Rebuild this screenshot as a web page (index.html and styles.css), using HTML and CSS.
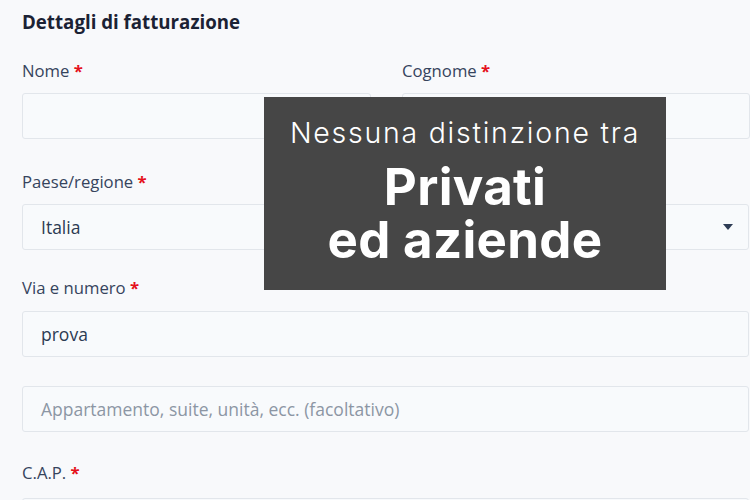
FILE: index.html
```html
<!DOCTYPE html>
<html lang="it">
<head>
<meta charset="utf-8">
<link rel="stylesheet" href="styles.css">
</head>
<body>
<div class="page">
  <h3 class="title">Dettagli di fatturazione</h3>
  <div class="row two">
    <div class="field">
      <label class="label">Nome <span class="req">*</span></label>
      <div class="input"></div>
    </div>
    <div class="field">
      <label class="label">Cognome <span class="req">*</span></label>
      <div class="input"></div>
    </div>
  </div>
  <div class="field f-paese">
    <label class="label">Paese/regione <span class="req">*</span></label>
    <div class="input select"><span class="val">Italia</span>
      <svg class="caret" width="10" height="6" viewBox="0 0 10 6"><path d="M0 0H10L5 6Z" fill="#2e3c55"/></svg>
    </div>
  </div>
  <div class="field f-via">
    <label class="label">Via e numero <span class="req">*</span></label>
    <div class="input"><span class="val">prova</span></div>
    <div class="input second"><span class="ph">Appartamento, suite, unità, ecc. (facoltativo)</span></div>
  </div>
  <div class="field f-cap">
    <label class="label">C.A.P. <span class="req">*</span></label>
    <div class="input"></div>
  </div>

  <div class="overlay">
    <div class="o-line1">Nessuna distinzione tra</div>
    <div class="o-big">Privati</div>
    <div class="o-big">ed aziende</div>
  </div>
</div>
</body>
</html>
```

FILE: styles.css
```css
html, body {
  margin: 0;
  padding: 0;
  background: #f8f9fb;
  overflow: hidden;
}
.page {
  position: relative;
  width: 750px;
  height: 500px;
  padding: 0 0 0 22px;
  box-sizing: border-box;
  overflow: hidden;
  font-family: "Open Sans", "Noto Sans", sans-serif;
  color: #35435c;
}
.title {
  margin: 0;
  padding-top: 10px;
  font-size: 18.7px;
  line-height: 24px;
  font-weight: 700;
  color: #1b2234;
  height: 49px;
}
.row.two {
  display: grid;
  grid-template-columns: 349px 348px;
  column-gap: 31px;
}
.field {
  display: flex;
  flex-direction: column;
}
.label {
  font-size: 16.7px;
  line-height: 24px;
  height: 24px;
  color: #36445d;
  margin-bottom: 10px;
}
.req {
  color: #e5111b;
  font-weight: 700;
}
.input {
  height: 46px;
  flex: none;
  box-sizing: border-box;
  border: 1px solid #e2e6eb;
  border-radius: 3px;
  background: #f8fafc;
  display: flex;
  align-items: center;
  padding: 0 18px;
  font-size: 17.5px;
  color: #2c3a52;
  width: 727px;
}
.row.two .input { width: auto; }
.f-paese { margin-top: 31px; }
.select { justify-content: space-between; padding-right: 15px; }
.caret { display: block; }
.f-via { margin-top: 26px; }
.f-via .label { margin-bottom: 11px; }
.input.second { margin-top: 29px; }
.ph { color: #8c96a4; }
.f-cap { margin-top: 29px; }
.f-cap .label { margin-bottom: 13px; }

.overlay {
  position: absolute;
  left: 264px;
  top: 97px;
  width: 402px;
  height: 193px;
  background: #464646;
  color: #fff;
  text-align: center;
  font-family: "Inter", sans-serif;
  padding-top: 16px;
  box-sizing: border-box;
}
.o-line1 {
  font-size: 28.5px;
  font-weight: 300;
  line-height: 40px;
  letter-spacing: 1.75px;
  margin-bottom: 7px;
}
.o-big {
  font-size: 51px;
  font-weight: 700;
  line-height: 53px;
  letter-spacing: 0.3px;
}
```
